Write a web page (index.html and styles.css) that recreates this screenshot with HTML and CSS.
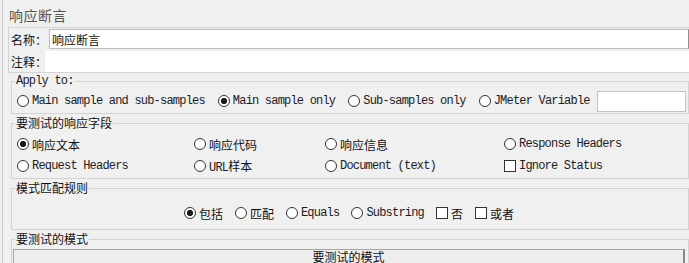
FILE: index.html
```html
<!DOCTYPE html>
<html lang="zh-CN">
<head>
    <meta charset="UTF-8">
    <meta name="viewport" content="width=device-width, initial-scale=1.0">
    <title>响应断言</title>
    <link rel="stylesheet" href="styles.css">
</head>
<body>
    <div class="panel">
        <div class="title">响应断言</div>

        <div class="names">
            <div class="name-row">
                <label class="name-label">名称：</label>
                <input class="field" type="text" value="响应断言">
            </div>
            <div class="name-row">
                <label class="comment-label">注释：</label>
                <input class="field field-comment" type="text" value="">
            </div>
        </div>

        <fieldset class="group group-apply">
            <legend class="mono">Apply to:</legend>
            <div class="apply-row">
                <label class="opt"><input type="radio" name="apply"><span class="mono">Main sample and sub-samples</span></label>
                <label class="opt"><input type="radio" name="apply" checked><span class="mono">Main sample only</span></label>
                <label class="opt"><input type="radio" name="apply"><span class="mono">Sub-samples only</span></label>
                <label class="opt"><input type="radio" name="apply"><span class="mono">JMeter Variable</span><input class="var-field" type="text"></label>
            </div>
        </fieldset>

        <fieldset class="group group-fields">
            <legend>要测试的响应字段</legend>
            <div class="field-grid">
                <label class="opt"><input type="radio" name="field" checked><span>响应文本</span></label>
                <label class="opt"><input type="radio" name="field"><span>响应代码</span></label>
                <label class="opt"><input type="radio" name="field"><span>响应信息</span></label>
                <label class="opt"><input type="radio" name="field"><span class="mono">Response Headers</span></label>
                <label class="opt"><input type="radio" name="field"><span class="mono">Request Headers</span></label>
                <label class="opt"><input type="radio" name="field"><span><span class="mono">URL</span>样本</span></label>
                <label class="opt"><input type="radio" name="field"><span class="mono">Document (text)</span></label>
                <label class="opt"><input type="checkbox"><span class="mono">Ignore Status</span></label>
            </div>
        </fieldset>

        <fieldset class="group group-match">
            <legend>模式匹配规则</legend>
            <div class="match-row">
                <label class="opt"><input type="radio" name="rule" checked><span>包括</span></label>
                <label class="opt"><input type="radio" name="rule"><span>匹配</span></label>
                <label class="opt"><input type="radio" name="rule"><span class="mono">Equals</span></label>
                <label class="opt"><input type="radio" name="rule"><span class="mono">Substring</span></label>
                <label class="opt"><input type="checkbox"><span>否</span></label>
                <label class="opt"><input type="checkbox"><span>或者</span></label>
            </div>
        </fieldset>

        <fieldset class="group group-pattern">
            <legend>要测试的模式</legend>
            <div class="pattern-head">要测试的模式</div>
        </fieldset>
    </div>
</body>
</html>
```

FILE: styles.css
```css
* {
    box-sizing: border-box;
}

body {
    margin: 0;
    height: 263px;
    overflow: hidden;
    background-color: #f0f0f0;
    font-family: "Noto Sans CJK SC", sans-serif;
    font-size: 12px;
    color: #111;
}

.panel {
    margin-left: 2px;
    height: 100vh;
    border-left: 1px solid #c8c8c8;
}

.title {
    padding: 3px 0 0 6px;
    height: 27px;
    line-height: 24px;
    font-size: 14px;
    letter-spacing: 0.5px;
    color: #555;
}

.mono {
    font-family: "Liberation Mono", monospace;
    font-size: 12px;
    letter-spacing: -0.8px;
    color: #1c1c24;
}

/* name / comment box */
.names {
    margin-left: 5px;
    border: 1px solid #d4d4d4;
    border-right: none;
}

.name-row {
    display: flex;
    align-items: center;
    height: 22px;
}

.name-label,
.comment-label {
    flex: none;
    padding-left: 2px;
    white-space: nowrap;
}

.name-label {
    width: 40px;
}

.comment-label {
    width: 36px;
}

.field {
    flex: 1;
    min-width: 0;
    height: 20px;
    margin: 0;
    padding: 0 2px;
    border: 1px solid #bdbdbd;
    border-right-color: #8f8f8f;
    background: #fff;
    font: inherit;
    color: #111;
    outline: none;
}

.field-comment {
    align-self: flex-end;
    height: 21px;
    border: none;
}

/* titled groups */
.group {
    min-width: 0;
    margin: 2px 0 0 8px;
    padding: 0 3px 0 1px;
    border: 1px solid #d3d3d3;
}

.group legend {
    margin-left: 2px;
    padding: 0 1px;
    line-height: 14px;
}

.group-apply {
    margin-top: 1px;
    padding-top: 1px;
}

.apply-row {
    display: flex;
    align-items: center;
    gap: 13px;
    height: 24px;
    padding-left: 4px;
}

.var-field {
    width: 89px;
    height: 21px;
    margin: 0 0 0 4px;
    border: 1px solid #c2c2c2;
    background: #fff;
    outline: none;
}

.field-grid {
    display: grid;
    grid-template-columns: 177px 131px 179px 1fr;
    grid-auto-rows: 22px;
    align-items: center;
    padding: 3px 0 1px 4px;
}

.match-row {
    display: flex;
    justify-content: center;
    align-items: center;
    gap: 12px;
    height: 22px;
    margin: 7px 0 5px;
}

.group-pattern {
    padding-top: 3px;
}

.pattern-head {
    height: 18px;
    border: 1px solid #a5a5a5;
    border-right: 2px solid #888;
    background: #eeeeee;
    text-align: center;
    line-height: 14px;
}

/* radio buttons and check boxes */
.opt {
    display: inline-flex;
    align-items: center;
    gap: 3px;
    white-space: nowrap;
}

.opt input[type="radio"],
.opt input[type="checkbox"] {
    appearance: none;
    flex: none;
    width: 12px;
    height: 12px;
    margin: 0;
    border: 1px solid #333;
    border-radius: 50%;
    background: #fff;
}

.opt input[type="radio"]:checked {
    background: radial-gradient(circle, #1a1a1a 0 2.8px, #fff 3.4px);
}

.opt input[type="checkbox"] {
    border-radius: 0;
}
```
